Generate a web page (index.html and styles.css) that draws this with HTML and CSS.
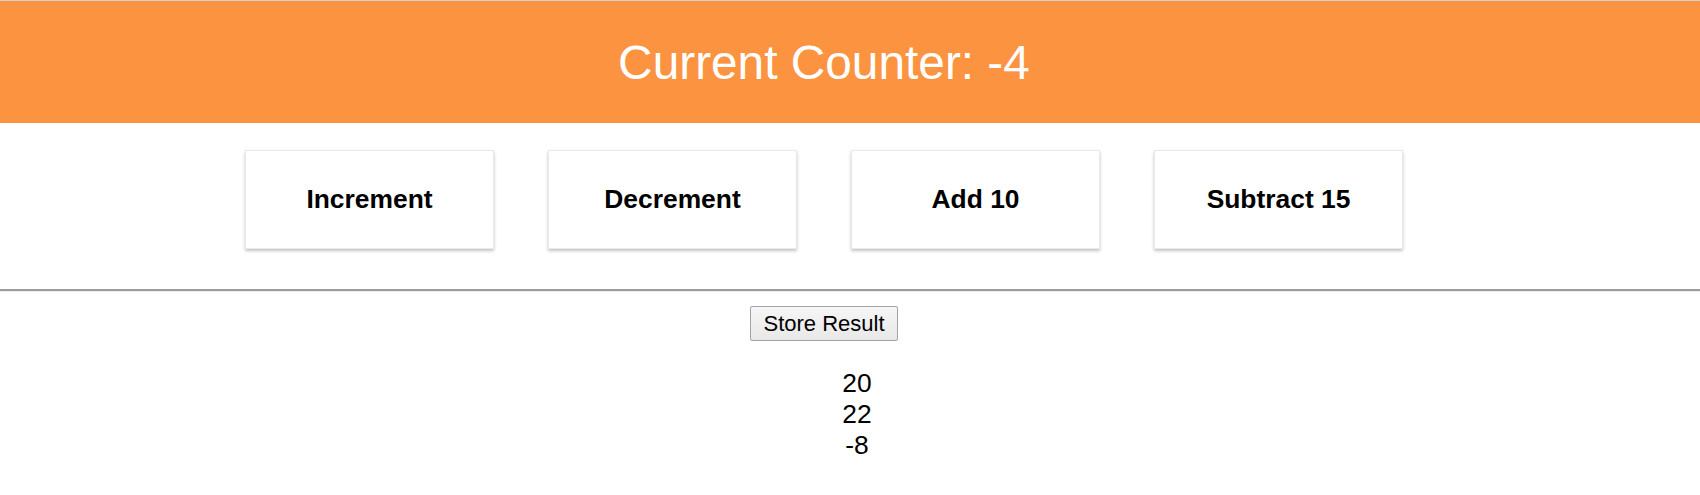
FILE: index.html
```html
<!DOCTYPE html>
<html>
<head>
<meta charset="utf-8">
<title>Counter</title>
<link rel="stylesheet" href="styles.css">
</head>
<body>
<div class="top-line"></div>
<header class="counter-output">
  <h1 class="counter-title">Current Counter: -4</h1>
</header>
<div class="controls">
  <div class="control-card">Increment</div>
  <div class="control-card">Decrement</div>
  <div class="control-card">Add 10</div>
  <div class="control-card">Subtract 15</div>
</div>
<hr class="divider">
<section class="results">
  <button class="store-btn">Store Result</button>
  <ul class="result-list">
    <li>20</li>
    <li>22</li>
    <li>-8</li>
  </ul>
</section>
</body>
</html>
```
FILE: styles.css
```css
html, body {
  margin: 0;
  padding: 0;
  background: #ffffff;
  font-family: "Liberation Sans", Arial, sans-serif;
  color: #000;
}

.top-line {
  height: 1px;
  background: #cfcfcf;
}

.counter-output {
  height: 122px;
  background: #fb9341;
  display: flex;
  align-items: center;
  justify-content: center;
  padding-right: 52px;
}

.counter-title {
  margin: 0;
  font-size: 47.8px;
  font-weight: normal;
  color: #ffffff;
  line-height: 1;
  padding-top: 2px;
}

.controls {
  width: 1648px;
  display: flex;
  justify-content: center;
  gap: 54px;
  padding-top: 27px;
}

.control-card {
  width: 249px;
  height: 99px;
  box-sizing: border-box;
  border: 1px solid #e9e9e9;
  box-shadow: 0 2px 3px #c4c4c4;
  background: #fff;
  display: flex;
  align-items: center;
  justify-content: center;
  font-size: 26.4px;
  font-weight: bold;
}

.divider {
  margin: 40px 0 0;
  border: 0;
  border-top: 2px solid #9b9b9b;
  border-bottom: 1px solid #eeeeee;
  height: 0;
}

.results {
  width: 1648px;
  text-align: center;
  padding-top: 14px;
}

.store-btn {
  width: 148px;
  height: 35px;
  font-family: "Liberation Sans", Arial, sans-serif;
  font-size: 22px;
  color: #000;
  background: linear-gradient(#f6f6f6, #e8e8e8);
  border: 1px solid #a3a3a3;
  border-radius: 2px;
  padding: 0;
  margin: 0;
}

.result-list {
  list-style: none;
  margin: 27px 0 0;
  padding-left: 66px;
  font-size: 26.4px;
  line-height: 30.8px;
}
```
